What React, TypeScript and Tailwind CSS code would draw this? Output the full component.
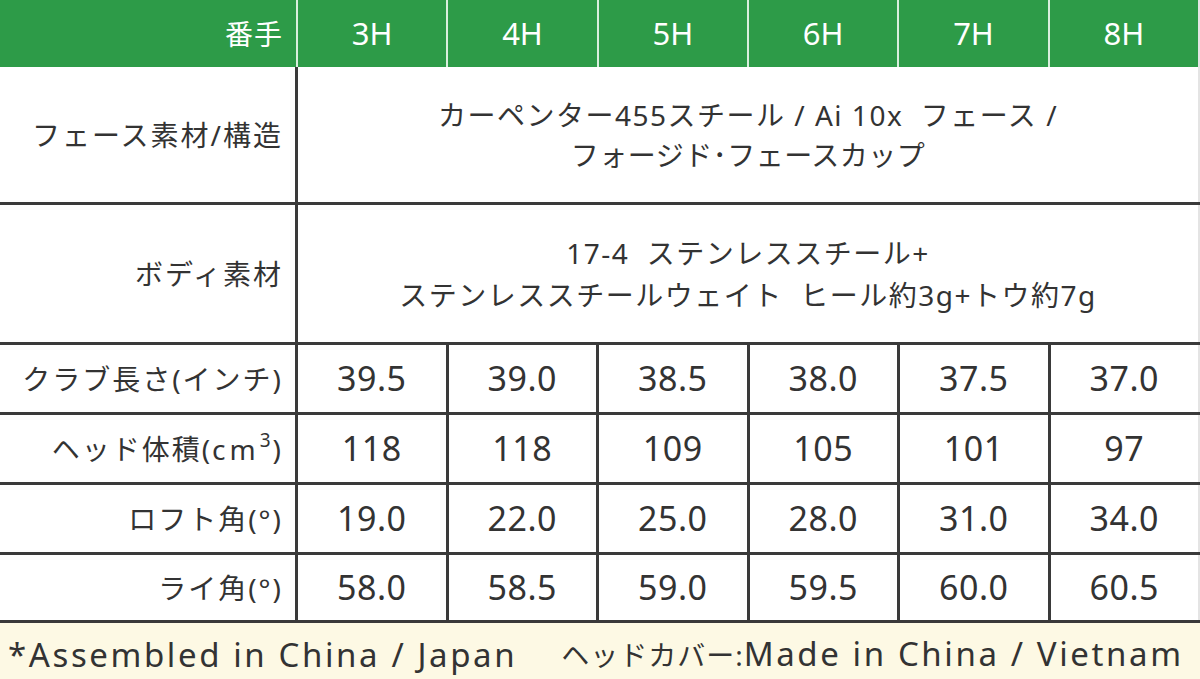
const HEADS = ["3H", "4H", "5H", "6H", "7H", "8H"];

const ROWS: { label: React.ReactNode; values: string[] }[] = [
  { label: "クラブ長さ(インチ)", values: ["39.5", "39.0", "38.5", "38.0", "37.5", "37.0"] },
  {
    label: (
      <>
        ヘッド体積(<span className="tracking-[4px]">cm</span><span className="relative -top-[8px] text-[19px]">3</span>)
      </>
    ),
    values: ["118", "118", "109", "105", "101", "97"],
  },
  { label: "ロフト角(°)", values: ["19.0", "22.0", "25.0", "28.0", "31.0", "34.0"] },
  { label: "ライ角(°)", values: ["58.0", "58.5", "59.0", "59.5", "60.0", "60.5"] },
];

const font = { fontFamily: '"Noto Sans", "Noto Sans CJK JP", sans-serif' };

function LabelCell({ children, h }: { children: React.ReactNode; h: string }) {
  return (
    <div className={`flex w-[298px] shrink-0 items-center justify-end border-r-[3px] border-[#3a3a3a] pr-[12px] text-[28px] tracking-[2px] text-[#333] ${h}`}>
      {children}
    </div>
  );
}

export default function App() {
  return (
    <div className="h-[679px] w-[1200px] overflow-hidden bg-white" style={font}>
      {/* header */}
      <div className="flex h-[67px] bg-[#2d9b48] text-white">
        <div className="flex w-[298px] shrink-0 items-center justify-end border-r-2 border-[#d9eedd] pr-[13px] text-[28px] tracking-[1px]">番手</div>
        {HEADS.map((h, i) => (
          <div key={h} className={`flex flex-1 items-center justify-center text-[31px] ${i < 5 ? "border-r-2 border-[#d9eedd]" : "border-r-2 border-[#e4e4e4]"}`}>
            {h}
          </div>
        ))}
      </div>

      {/* face */}
      <div className="flex border-b-[3px] border-[#3a3a3a]">
        <LabelCell h="h-[135px]">フェース素材/構造</LabelCell>
        <div className="flex flex-1 flex-col items-center justify-center border-r-2 border-[#e4e4e4] text-[28px] leading-[40px] tracking-[1.5px] text-[#333]">
          <span>カーペンター455スチール&nbsp;/&nbsp;Ai 10x&nbsp; フェース&nbsp;/</span>
          <span className="tracking-[0.5px]">フォージド･フェースカップ</span>
        </div>
      </div>

      {/* body */}
      <div className="flex border-b-[3px] border-[#3a3a3a]">
        <LabelCell h="h-[137px]">ボディ素材</LabelCell>
        <div className="flex flex-1 flex-col items-center justify-center border-r-2 border-[#e4e4e4] text-[28px] leading-[42px] tracking-[1.5px] text-[#333]">
          <span>17-4&nbsp; ステンレススチール+</span>
          <span>ステンレススチールウェイト&nbsp; ヒール約3g+トウ約7g</span>
        </div>
      </div>

      {ROWS.map((r, ri) => (
        <div key={ri} className="flex border-b-[3px] border-[#3a3a3a]">
          <LabelCell h={ri === 3 ? "h-[65px]" : "h-[67px]"}>{r.label}</LabelCell>
          {r.values.map((v, i) => (
            <div key={i} className={`flex flex-1 items-center justify-center text-[34px] tracking-[0.5px] text-[#333] ${i < 5 ? "border-r-[3px] border-[#3a3a3a]" : "border-r-2 border-[#e4e4e4]"}`}>
              {v}
            </div>
          ))}
        </div>
      ))}

      {/* footer */}
      <div className="flex h-[56px] items-end gap-[44px] bg-[#fdf9e4] pb-[1px] pl-[8px] text-[33px] leading-[46px] tracking-[2.6px] text-[#333]">
        <span>*Assembled in China / Japan</span>
        <span>
          <span className="text-[28px] tracking-[1px]">ヘッドカバー:</span>Made in China / Vietnam
        </span>
      </div>
    </div>
  );
}
